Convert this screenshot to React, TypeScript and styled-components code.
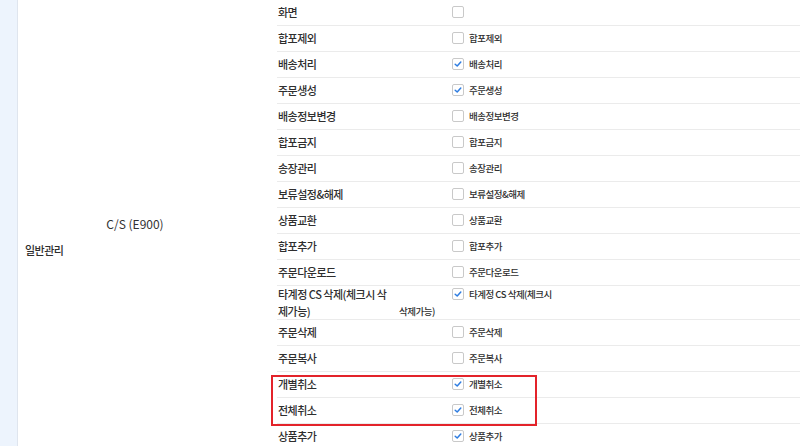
import React from "react";
import styled, { createGlobalStyle } from "styled-components";

const Global = createGlobalStyle`
  html, body { margin: 0; padding: 0; background: #fff; }
  body {
    font-family: "Noto Sans CJK KR", "Noto Sans", sans-serif;
    color: #2e2e2e;
    overflow: hidden;
  }
`;

const Table = styled.div`
  display: flex;
  width: 800px;
  height: 446px;
  overflow: hidden;
`;

const Strip = styled.div`
  width: 17px;
  flex: none;
  background: #edf4fd;
  border-right: 1px solid #dfe5ee;
`;

const GroupCell = styled.div`
  width: 259px;
  flex: none;
  display: flex;
  flex-direction: column;
  padding-top: 215px;
  box-sizing: border-box;
`;

const SubTitle = styled.div`
  font-size: 12px;
  font-weight: 400;
  line-height: 18px;
  height: 18px;
  text-align: center;
  padding-right: 25px;
  color: #333;
`;

const CategoryTitle = styled.div`
  font-size: 11px;
  font-weight: 500;
  letter-spacing: -0.5px;
  line-height: 18px;
  margin-top: 8px;
  padding-left: 7px;
`;

const Rows = styled.div`
  flex: 1;
  display: flex;
  flex-direction: column;
`;

const Row = styled.div<{ $tall?: boolean }>`
  display: flex;
  align-items: center;
  height: ${(p) => (p.$tall ? "33px" : "25px")};
  border-bottom: 1px solid #ebebeb;
  flex: none;
  padding-left: 1px;
`;

const Label = styled.div`
  width: 121px;
  flex: none;
  font-size: 11px;
  font-weight: 500;
  letter-spacing: -0.5px;
  line-height: 17px;
  white-space: nowrap;
`;

const CheckCell = styled.div`
  flex: 1;
  text-indent: 53px;
  font-size: 9.5px;
  font-weight: 500;
  letter-spacing: -0.5px;
  line-height: 17px;
  white-space: nowrap;
`;

const Box = styled.span`
  display: inline-block;
  text-indent: 0;
  width: 10px;
  height: 10px;
  border: 1px solid #c9c9c9;
  border-radius: 2px;
  background: #fff;
  vertical-align: -2px;
  margin-right: 5px;
  position: relative;
  svg {
    display: block;
  }
`;

const Highlight = styled.div`
  position: relative;
  display: flex;
  flex-direction: column;
  &::after {
    content: "";
    position: absolute;
    left: -6px;
    top: 3px;
    width: 262px;
    bottom: -2px;
    border: 2px solid #e3232a;
    pointer-events: none;
  }
`;

const Check = ({ on }: { on: boolean }) => (
  <Box>
    {on && (
      <svg width="10" height="10" viewBox="0 0 10 10">
        <polyline
          points="2.2,5.2 4.2,7 7.8,3"
          fill="none"
          stroke="#2f7de1"
          strokeWidth="1.5"
          strokeLinecap="round"
          strokeLinejoin="round"
        />
      </svg>
    )}
  </Box>
);

type Item = { label: string; text?: string; on?: boolean };

const items: Item[] = [
  { label: "화면", text: "" },
  { label: "합포제외" },
  { label: "배송처리", on: true },
  { label: "주문생성", on: true },
  { label: "배송정보변경" },
  { label: "합포금지" },
  { label: "송장관리" },
  { label: "보류설정&해제" },
  { label: "상품교환" },
  { label: "합포추가" },
  { label: "주문다운로드" },
];

const tail: Item[] = [
  { label: "주문삭제" },
  { label: "주문복사" },
];

const highlighted: Item[] = [
  { label: "개별취소", on: true },
  { label: "전체취소", on: true },
];

const SimpleRow = ({ item }: { item: Item }) => (
  <Row>
    <Label>{item.label}</Label>
    <CheckCell>
      <Check on={!!item.on} />
      {item.text ?? item.label}
    </CheckCell>
  </Row>
);

export default function App() {
  return (
    <>
      <Global />
      <Table>
        <Strip />
        <GroupCell>
          <SubTitle>C/S (E900)</SubTitle>
          <CategoryTitle>일반관리</CategoryTitle>
        </GroupCell>
        <Rows>
          {items.map((it) => (
            <SimpleRow key={it.label} item={it} />
          ))}
          <Row $tall>
            <Label>
              타계정 CS 삭제(체크시 삭
              <br />
              제가능)
            </Label>
            <CheckCell>
              <Check on />
              타계정 CS 삭제(체크시
              <br />
              삭제가능)
            </CheckCell>
          </Row>
          {tail.map((it) => (
            <SimpleRow key={it.label} item={it} />
          ))}
          <Highlight>
            {highlighted.map((it) => (
              <SimpleRow key={it.label} item={it} />
            ))}
          </Highlight>
          <SimpleRow item={{ label: "상품추가", on: true }} />
        </Rows>
      </Table>
    </>
  );
}
